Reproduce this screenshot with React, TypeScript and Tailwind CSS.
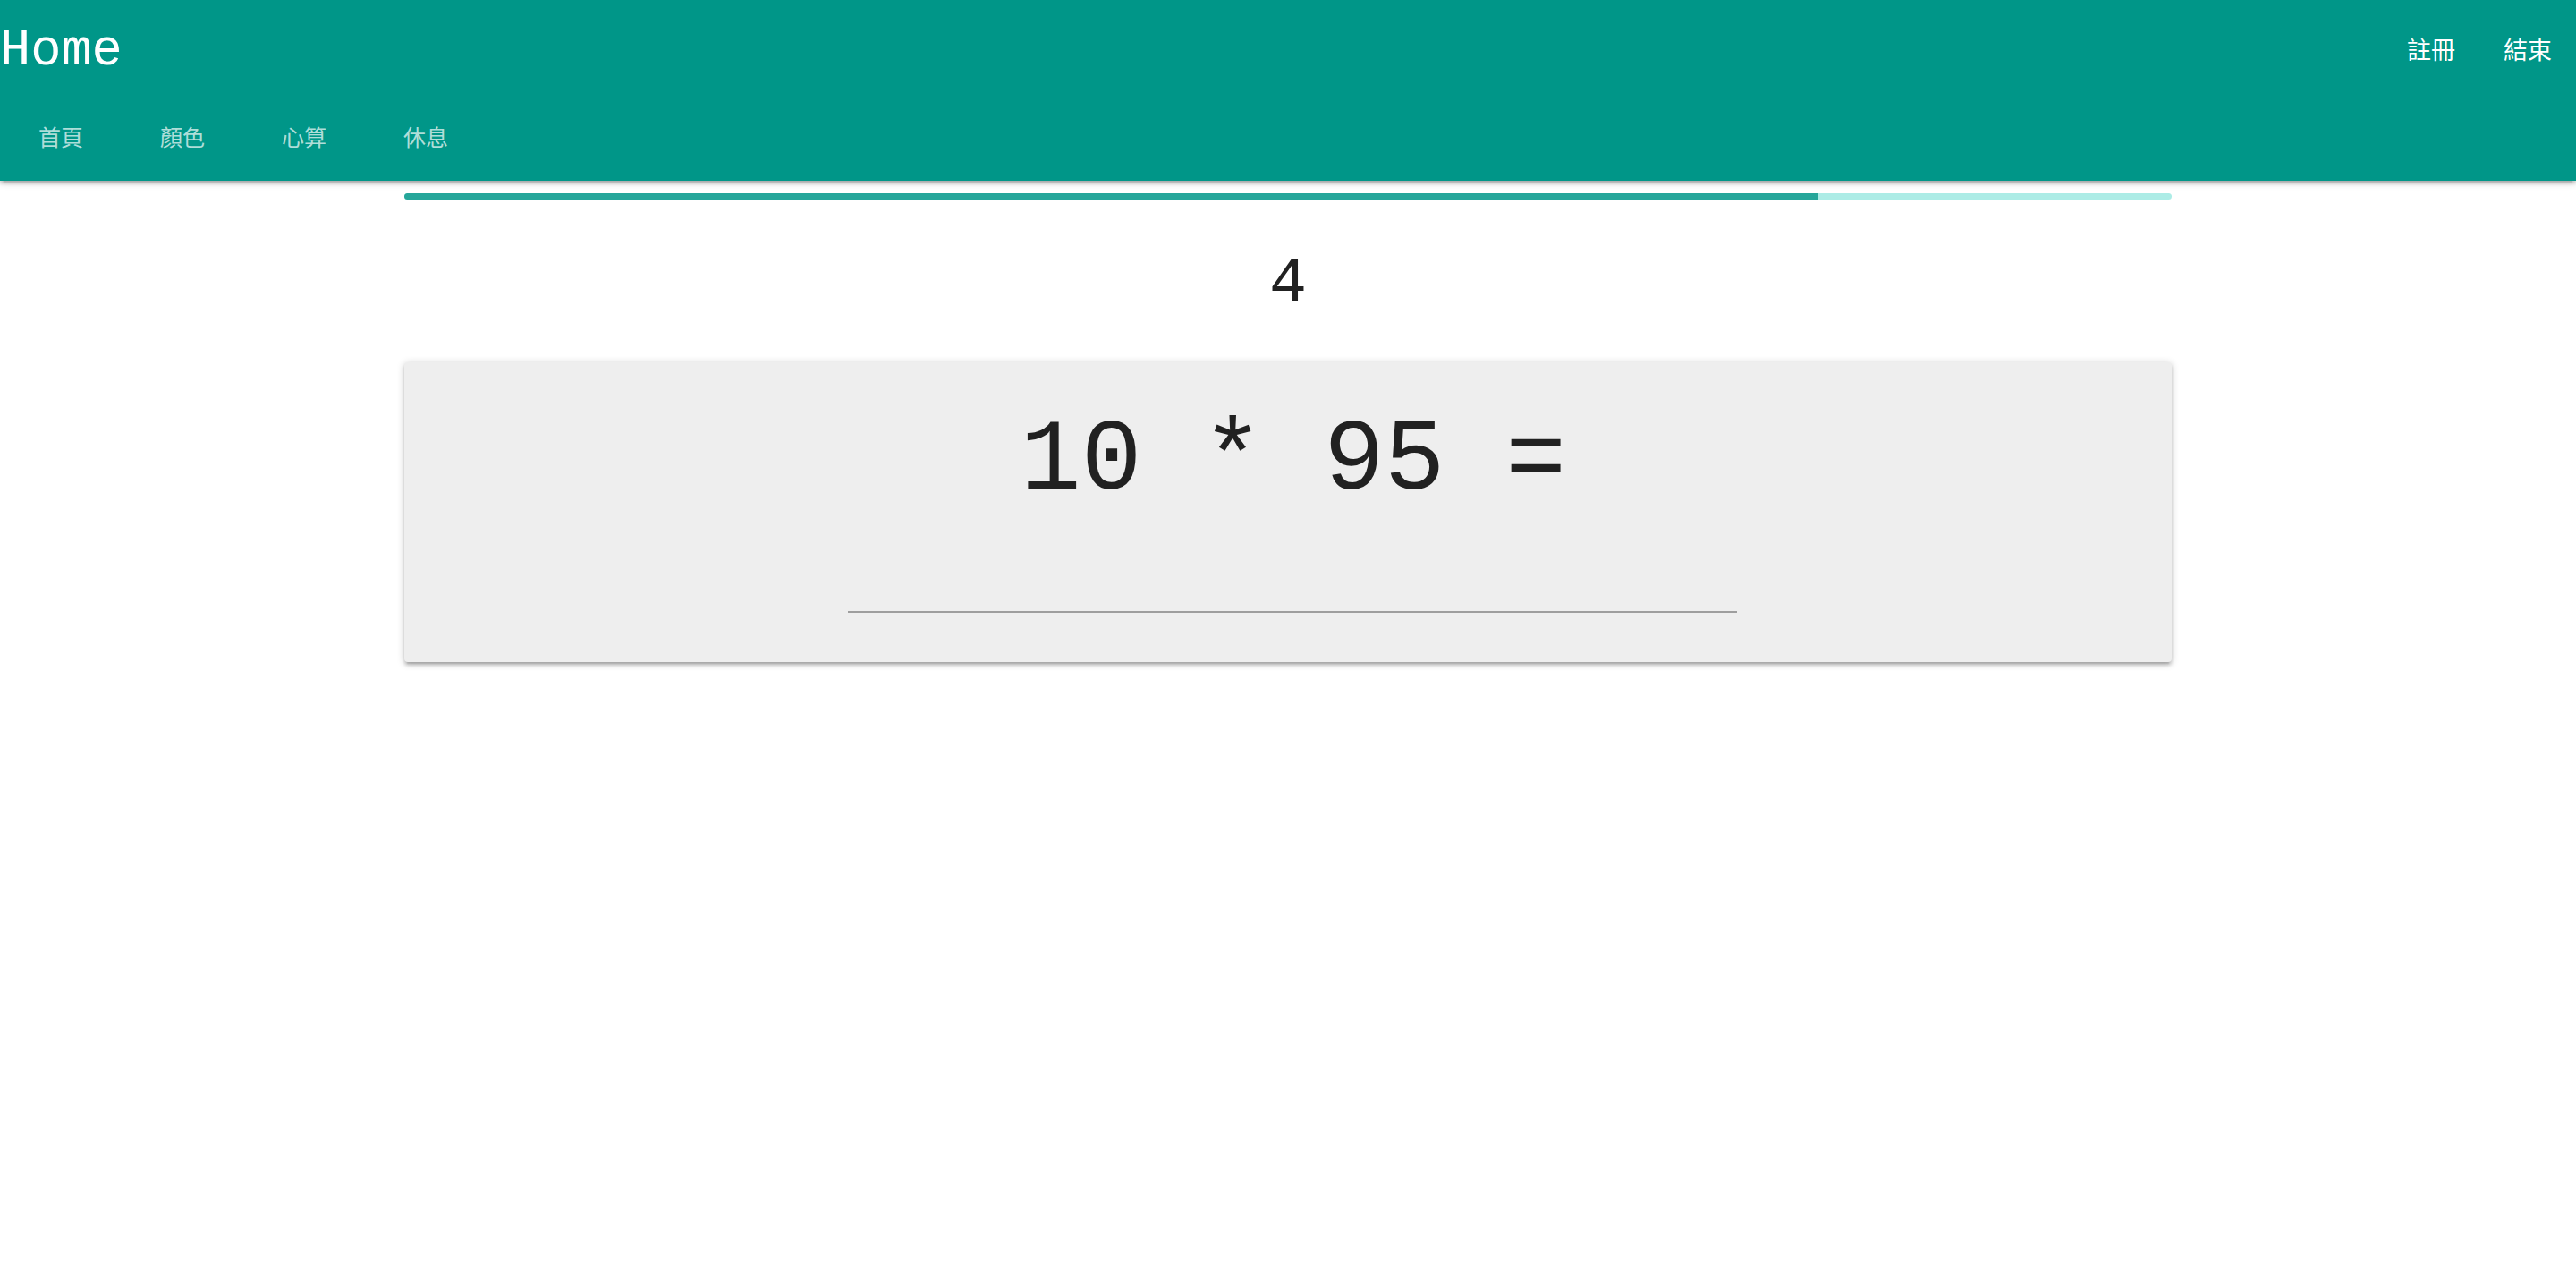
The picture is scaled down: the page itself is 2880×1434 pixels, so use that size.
const TABS = ["首頁", "顏色", "心算", "休息"];
const LINKS = ["註冊", "結束"];

// current question index / total, drives the progress bar
const PROGRESS = 80;

export default function App() {
  return (
    <div className="min-h-screen bg-white font-['Roboto','Noto_Sans_CJK_TC',sans-serif] text-[#212121]">
      <header className="bg-[#009688] text-white shadow-[0_3.6px_3.6px_0_rgba(0,0,0,0.14),0_5.4px_1.8px_-3.6px_rgba(0,0,0,0.12),0_1.8px_9px_0_rgba(0,0,0,0.2)]">
        <div className="flex h-[115px] items-center justify-between">
          <a className="font-['Liberation_Mono',monospace] text-[57px] leading-[115px]">Home</a>
          <ul className="flex">
            {LINKS.map((l) => (
              <li key={l}>
                <a className="block px-[27px] text-[27px] leading-[115px]">{l}</a>
              </li>
            ))}
          </ul>
        </div>
        <ul className="flex h-[87px]">
          {TABS.map((t) => (
            <li key={t}>
              <a className="block px-[43px] text-[25px] leading-[79px] text-white/70">{t}</a>
            </li>
          ))}
        </ul>
      </header>

      <main className="mx-auto w-[1976px]">
        <div className="mt-[14px] h-[7px] overflow-hidden rounded-[4px] bg-[#acece6]">
          <div className="h-full bg-[#26a69a]" style={{ width: `${PROGRESS}%` }} />
        </div>

        <div className="mt-[51px] text-center font-['Liberation_Mono',monospace] text-[70px] leading-[87px]">
          4
        </div>

        <div className="mt-[44px] rounded-[4px] bg-[#eeeeee] px-[43px] pt-[49px] pb-[55px] shadow-[0_3.6px_3.6px_0_rgba(0,0,0,0.14),0_5.4px_1.8px_-3.6px_rgba(0,0,0,0.12),0_1.8px_9px_0_rgba(0,0,0,0.2)]">
          <div className="whitespace-pre pl-[12px] text-center font-['Liberation_Mono',monospace] text-[113px] leading-[124px]">
            10 * 95 =
          </div>
          <div className="mt-[26px] ml-[453px] h-[81px] w-[994px] border-b-2 border-[#9e9e9e]" />
        </div>
      </main>
    </div>
  );
}
